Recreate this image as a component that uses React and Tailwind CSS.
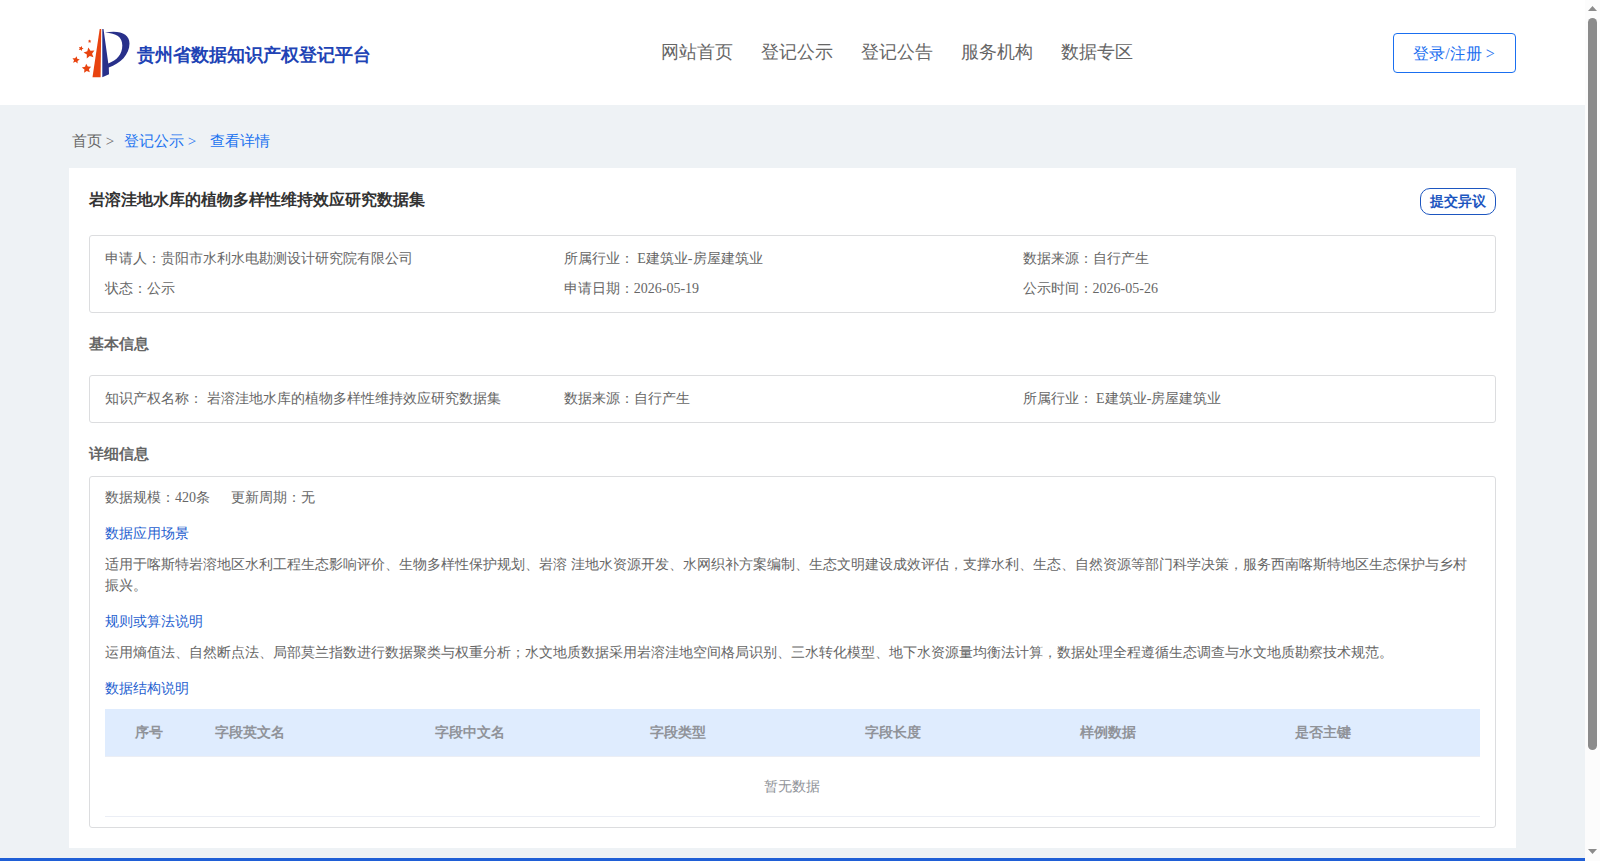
const NAV = ['网站首页', '登记公示', '登记公告', '服务机构', '数据专区'];

const SUMMARY = [
  '申请人：贵阳市水利水电勘测设计研究院有限公司',
  '所属行业： E建筑业-房屋建筑业',
  '数据来源：自行产生',
  '状态：公示',
  '申请日期：2026-05-19',
  '公示时间：2026-05-26',
];

const BASIC = [
  '知识产权名称： 岩溶洼地水库的植物多样性维持效应研究数据集',
  '数据来源：自行产生',
  '所属行业： E建筑业-房屋建筑业',
];

const COLUMNS = ['字段英文名', '字段中文名', '字段类型', '字段长度', '样例数据', '是否主键'];

function Star({ x, y, r, rot = 0 }) {
  const pts = Array.from({ length: 10 }, (_, i) => {
    const a = ((i * 36 - 90 + rot) * Math.PI) / 180;
    const d = i % 2 ? r * 0.48 : r;
    return `${(x + d * Math.cos(a)).toFixed(2)},${(y + d * Math.sin(a)).toFixed(2)}`;
  }).join(' ');
  return <polygon points={pts} fill="#e8430f" />;
}

function Logo() {
  return (
    <svg width="60" height="50" viewBox="0 0 60 50" className="shrink-0">
      <path d="M27.700 1 L29.200 1 L28.600 49.300 L20.500 49.300 Z" fill="#e8430f" />
      <path d="M30.300 1 L31.500 1 L36.300 35.500 C45 32 50.300 26.500 50.300 17.500 C50.300 9 44.500 5 33 4.700 C48 2 57.500 6 57.500 15.500 C57.500 26.500 48.500 35.500 36.800 39.500 L37 46.300 L30.300 49.300 Z" fill="#28308a" />
      <Star x={17.3} y={25.3} r={5.8} rot={-10} />
      <Star x={3.9} y={32} r={3.9} rot={10} />
      <Star x={14.6} y={40.6} r={4.9} rot={-5} />
      <Star x={9} y={20.5} r={2.6} rot={20} />
      <Star x={17.6} y={13.3} r={1.8} />
    </svg>
  );
}

function InfoBox({ items }) {
  return (
    <div className="grid grid-cols-[458.8px_458.8px_1fr] rounded-[3px] border border-[#dcdddf] pl-[15px] py-2 text-sm leading-[30px]">
      {items.map((t) => (
        <div key={t} className="whitespace-nowrap">{t}</div>
      ))}
    </div>
  );
}

function Scrollbar() {
  return (
    <div className="flex w-[15px] shrink-0 flex-col items-center bg-[#fcfcfc]">
      <svg width="15" height="18" viewBox="0 0 15 18" className="shrink-0">
        <path d="M3 11 L7.500 6 L12 11 Z" fill="#8b8b8b" />
      </svg>
      <div className="h-[732px] w-[9px] rounded-full bg-[#8b8b8b]" />
      <div className="flex-1" />
      <svg width="15" height="18" viewBox="0 0 15 18" className="shrink-0">
        <path d="M3 6 L12 6 L7.500 11 Z" fill="#8b8b8b" />
      </svg>
    </div>
  );
}

export default function App() {
  return (
    <div className="flex h-[861px] w-[1600px] overflow-hidden bg-[#eef2f5] font-['Liberation_Serif',serif] text-[#666]">
      <div className="flex min-w-0 flex-1 flex-col">
        <header className="flex h-[105px] shrink-0 items-start bg-white pr-[69px] pl-[72px]">
          <div className="flex w-[588.5px] items-start pt-7">
            <Logo />
            <div className="ml-[5px] pt-[14px] text-lg leading-[27px] font-bold text-[#2143b5]">贵州省数据知识产权登记平台</div>
          </div>
          <nav className="flex flex-1 gap-7 pt-[39px] text-lg leading-[27px]">
            {NAV.map((n) => (
              <a key={n}>{n}</a>
            ))}
          </nav>
          <button className="mt-[33px] h-10 w-[123px] rounded border border-[#1a6ff0] pt-[2px] pr-[1px] text-base text-[#1a6ff0]">登录/注册 &gt;</button>
        </header>

        <main className="flex flex-1 flex-col pr-[69px] pl-[69px]">
          <div className="flex h-[63px] pt-[25px] pl-[3px] text-[15px] leading-[22px]">
            <span className="w-[52px]">首页 &gt;</span>
            <span className="w-[86px] text-[#1a73f0]">登记公示 &gt;</span>
            <span className="text-[#1a73f0]">查看详情</span>
          </div>

          <section className="h-[680px] bg-white px-5 pt-5">
            <div className="flex h-[47px] items-start justify-between">
              <h1 className="text-base leading-6 font-bold text-[#333]">岩溶洼地水库的植物多样性维持效应研究数据集</h1>
              <button className="h-[27px] w-[76px] rounded-[10px] border border-[#1d56c0] pr-[1px] text-sm leading-[25px] font-bold text-[#1d56c0]">提交异议</button>
            </div>
            <InfoBox items={SUMMARY} />
            <h2 className="flex h-[62px] items-center text-[15px] font-bold">基本信息</h2>
            <InfoBox items={BASIC} />
            <h2 className="flex h-[53px] items-center pt-[10px] text-[15px] font-bold">详细信息</h2>

            <div className="rounded-[3px] border border-[#dcdddf] px-[15px] py-[10px] text-sm leading-[21px]">
              <div className="flex gap-[21px]">
                <span>数据规模：420条</span>
                <span>更新周期：无</span>
              </div>
              <h3 className="mt-[15px] text-[#1f5fd0]">数据应用场景</h3>
              <p className="mt-[10px]">适用于喀斯特岩溶地区水利工程生态影响评价、生物多样性保护规划、岩溶 洼地水资源开发、水网织补方案编制、生态文明建设成效评估，支撑水利、生态、自然资源等部门科学决策，服务西南喀斯特地区生态保护与乡村振兴。</p>
              <h3 className="mt-[15px] text-[#1f5fd0]">规则或算法说明</h3>
              <p className="mt-[10px]">运用熵值法、自然断点法、局部莫兰指数进行数据聚类与权重分析；水文地质数据采用岩溶洼地空间格局识别、三水转化模型、地下水资源量均衡法计算，数据处理全程遵循生态调查与水文地质勘察技术规范。</p>
              <h3 className="mt-[15px] text-[#1f5fd0]">数据结构说明</h3>
              <div className="mt-[10px] text-[#909399]">
                <div className="grid h-12 grid-cols-[100px_220px_215px_215px_215px_215px_195px] items-center border-b border-[#ebeef5] bg-[#dfecfe] font-bold">
                  <div className="pl-[30px]">序号</div>
                  {COLUMNS.map((c) => (
                    <div key={c} className="pl-[10px]">{c}</div>
                  ))}
                </div>
                <div className="flex h-[60px] items-center justify-center border-b border-[#ebeef5] pr-[1px]">暂无数据</div>
              </div>
            </div>
          </section>
        </main>
        <footer className="h-[3px] shrink-0 bg-[#1f5fd6]" />
      </div>
      <Scrollbar />
    </div>
  );
}
